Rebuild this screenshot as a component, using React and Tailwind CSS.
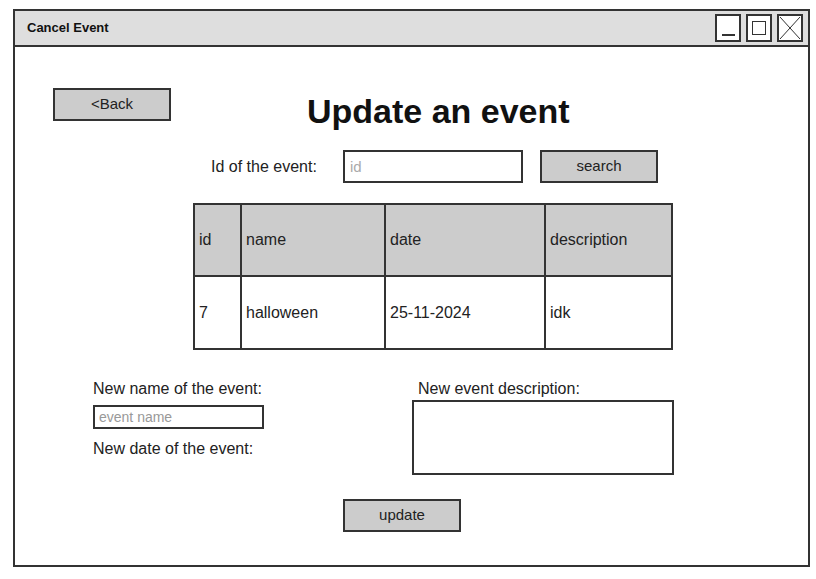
import React from 'react';

const font = { fontFamily: '"Liberation Sans", Arial, sans-serif' };

const GrayButton = ({ label, className = '' }) => (
  <button
    type="button"
    className={`h-[33px] w-[118px] bg-[#cccccc] border-2 border-[#333333] text-[15px] text-[#222222] ${className}`}
  >
    {label}
  </button>
);

const WinButton = ({ children }) => (
  <div className="w-[26px] h-[28px] border-2 border-[#333333] bg-white flex items-center justify-center">
    {children}
  </div>
);

const App = () => {
  const columns = [
    { key: 'id', w: 'w-[47px]' },
    { key: 'name', w: 'w-[144px]' },
    { key: 'date', w: 'w-[160px]' },
    { key: 'description', w: 'flex-1' },
  ];
  const row = ['7', 'halloween', '25-11-2024', 'idk'];

  return (
    <div className="w-[816px] h-[579px] bg-white pt-[9px] pl-[13px]" style={font}>
      <div className="w-[797px] h-[558px] border-2 border-[#333333] flex flex-col">
        {/* Title bar */}
        <div className="h-[36px] bg-[#dedede] border-b-2 border-[#333333] flex items-center justify-between pl-[12px] pr-[5px]">
          <span className="text-[13px] font-bold text-[#111111]">Cancel Event</span>
          <div className="flex gap-[5px]">
            <WinButton>
              <div className="w-[13px] h-[1.5px] bg-[#333333] mt-[14px]" />
            </WinButton>
            <WinButton>
              <div className="w-[14px] h-[14px] border-[1.5px] border-[#333333]" />
            </WinButton>
            <WinButton>
              <svg width="22" height="24" viewBox="0 0 22 24" fill="none" stroke="#333333" strokeWidth="1">
                <path d="M1 1 L21 23 M21 1 L1 23" />
              </svg>
            </WinButton>
          </div>
        </div>

        {/* Back + heading */}
        <div className="flex items-start pl-[38px] pt-[41px]">
          <GrayButton label="<Back" className="text-[14px]" />
          <h1 className="ml-[136px] mt-[3px] text-[34px] font-bold text-[#111111] leading-[40px]">
            Update an event
          </h1>
        </div>

        {/* Search row */}
        <div className="flex items-center pl-[196px] mt-[19px]">
          <span className="text-[16px] text-[#222222] w-[132px]">Id of the event:</span>
          <input
            placeholder="id"
            className="h-[33px] w-[180px] border-2 border-[#333333] px-[5px] text-[15px] placeholder:text-[#aaaaaa] outline-none"
          />
          <GrayButton label="search" className="ml-[17px]" />
        </div>

        {/* Table */}
        <div className="ml-[178px] mt-[20px] w-[480px] border-2 border-[#333333] text-[16px] text-[#222222]">
          <div className="flex h-[72px] bg-[#cccccc] border-b-2 border-[#333333]">
            {columns.map((c, i) => (
              <div
                key={c.key}
                className={`${c.w} flex items-center pl-[4px] ${i < 3 ? 'border-r-2 border-[#333333]' : ''}`}
              >
                {c.key}
              </div>
            ))}
          </div>
          <div className="flex h-[71px]">
            {row.map((v, i) => (
              <div
                key={i}
                className={`${columns[i].w} flex items-center pl-[4px] ${i < 3 ? 'border-r-2 border-[#333333]' : ''}`}
              >
                {v}
              </div>
            ))}
          </div>
        </div>

        {/* New values */}
        <div className="flex mt-[28px] text-[16px] text-[#222222]">
          <div className="pl-[78px] w-[397px] flex flex-col">
            <span className="leading-[22px]">New name of the event:</span>
            <input
              placeholder="event name"
              className="mt-[5px] h-[24px] w-[171px] border-2 border-[#333333] px-[4px] text-[14px] placeholder:text-[#999999] outline-none"
            />
            <span className="mt-[9px] leading-[22px]">New date of the event:</span>
          </div>
          <div className="flex flex-col">
            <span className="pl-[6px] leading-[22px]">New event description:</span>
            <textarea className="h-[75px] w-[262px] border-2 border-[#333333] resize-none outline-none" />
          </div>
        </div>

        {/* Update */}
        <div className="pl-[328px] mt-[24px]">
          <GrayButton label="update" />
        </div>
      </div>
    </div>
  );
};

export default App;
